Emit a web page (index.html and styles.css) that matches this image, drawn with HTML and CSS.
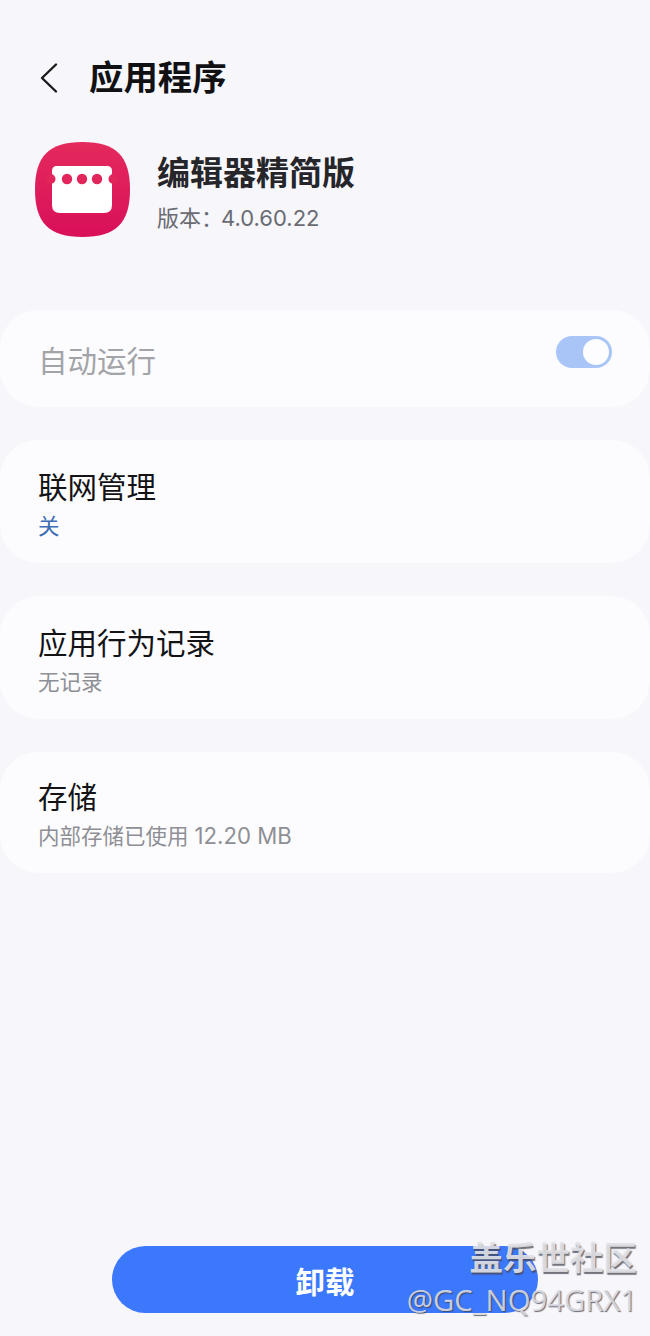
FILE: index.html
```html
<!DOCTYPE html>
<html lang="zh-CN">
<head>
<meta charset="utf-8">
<title>应用程序</title>
<link rel="stylesheet" href="styles.css">
</head>
<body>
<main class="page">
  <header class="topbar">
    <svg class="back" viewBox="0 0 20 32" width="20" height="32" aria-hidden="true"><path d="M17 2.500 3 16l14 13.500" fill="none" stroke="#1a1a1c" stroke-width="2.400" stroke-linecap="round" stroke-linejoin="round"/></svg>
    <h1 class="page-title">应用程序</h1>
  </header>

  <section class="app-info">
    <svg class="app-icon" viewBox="0 0 95 95" width="95" height="95" aria-hidden="true">
      <defs>
        <linearGradient id="pink" x1="0" y1="0" x2="0" y2="1">
          <stop offset="0" stop-color="#e42a5c"/>
          <stop offset="1" stop-color="#d90f5a"/>
        </linearGradient>
      </defs>
      <path d="M47.500 0C81 0 95 14 95 47.500S81 95 47.500 95 0 81 0 47.500 14 0 47.500 0Z" fill="url(#pink)"/>
      <path d="M22 24H72Q77 24 77 29V63Q77 71 69 71H25Q17 71 17 63V29Q17 24 22 24Z" fill="#fff"/>
      <g fill="#e2255a">
        <circle cx="15.500" cy="37" r="5"/>
        <circle cx="32" cy="37" r="5.200"/>
        <circle cx="47" cy="37" r="5.200"/>
        <circle cx="62" cy="37" r="5.200"/>
        <circle cx="78.500" cy="37" r="5"/>
      </g>
    </svg>
    <div class="app-text">
      <h2 class="app-name">编辑器精简版</h2>
      <p class="app-version">版本：<span class="version-num">4.0.60.22</span></p>
    </div>
  </section>

  <section class="cards">
    <div class="card card-toggle">
      <span class="row-title is-disabled">自动运行</span>
      <span class="toggle"><span class="knob"></span></span>
    </div>
    <div class="card">
      <span class="row-title">联网管理</span>
      <span class="row-sub is-blue">关</span>
    </div>
    <div class="card">
      <span class="row-title">应用行为记录</span>
      <span class="row-sub">无记录</span>
    </div>
    <div class="card card-last">
      <span class="row-title">存储</span>
      <span class="row-sub">内部存储已使用 <span class="size-num">12.20 MB</span></span>
    </div>
  </section>

  <div class="actions">
    <button class="uninstall" type="button">卸载</button>
  </div>

  <div class="watermark">
    <span class="wm-brand">盖乐世社区</span>
    <span class="wm-user">@GC_NQ94GRX1</span>
  </div>
</main>
</body>
</html>
```

FILE: styles.css
```css
* { box-sizing: border-box; }

html, body { margin: 0; padding: 0; }

body {
  background: #f6f6fb;
  font-family: Inter, "Noto Sans CJK SC", "Noto Sans", sans-serif;
  color: #141416;
}

.page {
  position: relative;
  display: flex;
  flex-direction: column;
  width: 650px;
  height: 1336px;
  overflow: hidden;
}

.topbar {
  display: flex;
  align-items: center;
  gap: 30px;
  height: 44px;
  margin-top: 56px;
  padding-left: 39px;
}

.back { flex: none; }

.page-title {
  margin: 0;
  font-size: 34.400px;
  line-height: 44px;
  font-weight: 700;
  color: #111113;
}

.app-info {
  display: flex;
  align-items: center;
  gap: 27px;
  margin-top: 42px;
  padding-left: 35px;
}

.app-icon { flex: none; }

.app-text {
  display: flex;
  flex-direction: column;
  gap: 8px;
  margin-top: 4px;
}

.app-name {
  margin: 0;
  font-size: 33px;
  line-height: 44px;
  font-weight: 700;
  color: #26262a;
}

.app-version {
  margin: 0;
  font-size: 22px;
  line-height: 30px;
  color: #6a6b72;
}

.version-num {
  margin-left: -2px;
}

.cards {
  display: flex;
  flex-direction: column;
  gap: 33px;
  margin-top: 73px;
}

.card {
  display: flex;
  flex-direction: column;
  height: 123px;
  padding: 28px 38px 0;
  background: #fcfcff;
  border-radius: 38px;
}

.card-toggle {
  flex-direction: row;
  justify-content: space-between;
  height: 97px;
  padding: 32px 38px 0;
}

.card-last {
  height: 121px;
  padding-top: 26px;
}

.row-title {
  font-size: 29.500px;
  line-height: 38px;
  color: #131315;
}

.row-title.is-disabled { color: #a3a4a8; }

.row-sub {
  margin-top: 5px;
  font-size: 21.500px;
  line-height: 30px;
  color: #8e8f94;
}

.row-sub.is-blue { color: #3d6db5; }

.size-num {
  font-size: 22.200px;
}

.toggle {
  display: flex;
  align-items: center;
  justify-content: flex-end;
  width: 56px;
  height: 32px;
  margin-top: -6px;
  padding-right: 3px;
  background: #a9c5f8;
  border-radius: 16px;
}

.knob {
  width: 26px;
  height: 26px;
  background: #fdfdff;
  border-radius: 50%;
}

.actions {
  display: flex;
  justify-content: center;
  margin-top: auto;
  margin-bottom: 23px;
}

.uninstall {
  width: 426px;
  height: 67px;
  padding: 0;
  border: 0;
  border-radius: 34px;
  background: #3b78fb;
  color: #fff;
  font-family: inherit;
  font-size: 29.500px;
  font-weight: 700;
}

.watermark {
  position: absolute;
  right: 13px;
  bottom: 18px;
  display: flex;
  flex-direction: column;
  align-items: flex-end;
  gap: 6px;
}

.wm-brand {
  font-size: 33.500px;
  line-height: 36px;
  font-weight: 700;
  color: rgba(226, 226, 230, 0.92);
  text-shadow: 1px 2px 1px rgba(70, 70, 80, 0.75);
}

.wm-user {
  font-family: "Open Sans", "Noto Sans", sans-serif;
  font-size: 29.300px;
  line-height: 36px;
  color: rgba(222, 222, 228, 0.9);
  text-shadow: 1px 1px 1px rgba(60, 60, 70, 0.75);
}
```
